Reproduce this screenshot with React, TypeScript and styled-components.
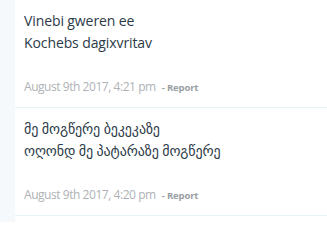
import React from 'react';
import styled, { createGlobalStyle } from 'styled-components';

const Global = createGlobalStyle`
  html, body { margin: 0; padding: 0; background: #fff; }
  body { font-family: "Open Sans", "DejaVu Sans", sans-serif; }
`;

type Comment = { lines: string[]; date: string };

const comments: Comment[] = [
  { lines: ['Vinebi gweren ee', 'Kochebs dagixvritav'], date: 'August 9th 2017, 4:21 pm' },
  { lines: ['მე მოგწერე ბეკეკაზე', 'ოღონდ მე პატარაზე მოგწერე'], date: 'August 9th 2017, 4:20 pm' },
];

const Page = styled.div`
  display: flex;
  min-height: 222px;
`;

const Rail = styled.div`
  width: 15px;
  flex: none;
  background: #f5f9fc;
`;

const List = styled.div`
  flex: 1;
  display: flex;
  flex-direction: column;
`;

const Item = styled.div`
  padding: 10px 0 9px 9px;
  border-bottom: 1px solid #e6f3f7;
`;

const Body = styled.div`
  color: #2c3a48;
  font-size: 14px;
  line-height: 22px;
  letter-spacing: -0.1px;
`;

const Meta = styled.div`
  margin-top: 23px;
  display: flex;
  align-items: baseline;
  gap: 6px;
  line-height: 20px;
  color: #aeb2b6;
  font-size: 12px;
  letter-spacing: -0.45px;
`;

const Report = styled.span`
  font-size: 9.6px;
  font-weight: 700;
  letter-spacing: -0.2px;
  color: #9a9fa4;
`;

export default function App() {
  return (
    <Page>
      <Global />
      <Rail />
      <List>
        {comments.map((c, i) => (
          <Item key={i}>
            <Body>
              {c.lines.map((l, j) => (
                <div key={j}>{l}</div>
              ))}
            </Body>
            <Meta>
              <span>{c.date}</span>
              <Report>- Report</Report>
            </Meta>
          </Item>
        ))}
      </List>
    </Page>
  );
}
